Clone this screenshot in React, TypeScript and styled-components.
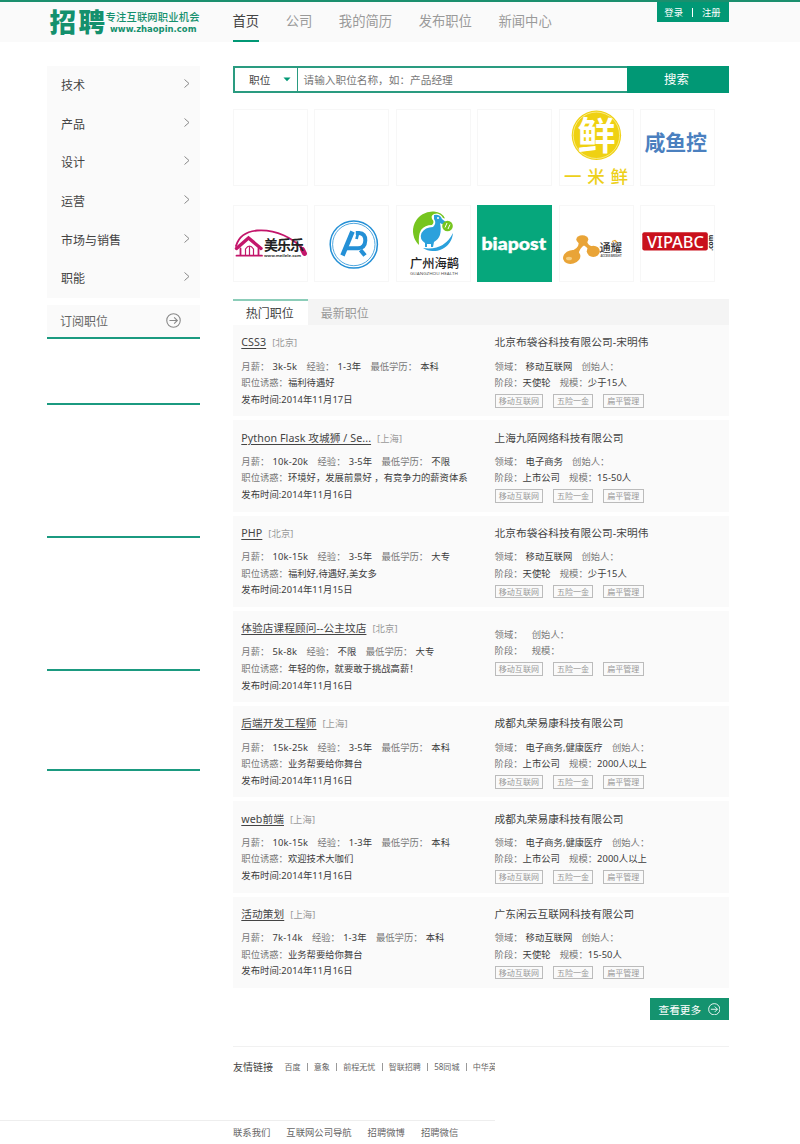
import React from "react";
import styled, { createGlobalStyle, css } from "styled-components";

const GREEN = "#019875";
const LATIN_CJK = `"Noto Sans", "Noto Sans CJK SC", sans-serif`;

const Global = createGlobalStyle`
  * { box-sizing: border-box; }
  body { margin: 0; background: #fff; font-family: ${LATIN_CJK}; color: #444; }
  #root { overflow: hidden; }
`;

const Page = styled.div`
  width: 800px;
  height: 1144px;
  overflow: hidden;
  white-space: nowrap;
`;

const Header = styled.header`
  height: 42px;
  border-top: 2px solid #1b8f6e;
  background: #fafafa;
  display: flex;
  align-items: flex-start;
  padding-left: 47px;
`;

const Brand = styled.svg`
  display: block;
  width: 185.5px;
  height: 40px;
  flex: none;
`;

const Nav = styled.nav`
  display: flex;
  gap: 26.5px;
  width: 424px;
`;

const NavItem = styled.a<{ $active?: boolean }>`
  height: 40px;
  line-height: 39px;
  font-size: 13.33px;
  color: ${(p) => (p.$active ? "#444" : "#9a9a9a")};
  border-bottom: 2px solid ${(p) => (p.$active ? GREEN : "transparent")};
`;

const Account = styled.div`
  width: 72px;
  height: 20px;
  background: ${GREEN};
  color: #fff;
  font-size: 9.33px;
  display: flex;
  align-items: center;
  justify-content: center;
  gap: 9px;
`;

const Divider = styled.i<{ $color: string; $h: number }>`
  flex: none;
  width: 1px;
  height: ${(p) => p.$h}px;
  background: ${(p) => p.$color};
`;

const Columns = styled.div`
  display: flex;
  height: 1004px;
  padding: 23.5px 0 0 47px;
`;

const Side = styled.aside`
  width: 153px;
  margin-right: 33px;
  flex: none;
`;

const Menu = styled.div`
  background: #fafafa;
  height: 232px;
`;

const MenuItem = styled.div`
  height: 38.6px;
  padding: 1px 9px 0 14px;
  display: flex;
  align-items: center;
  justify-content: space-between;
  font-size: 12px;
  color: #444;
  svg { position: relative; top: -1px; }
`;

const Subscribe = styled.div`
  margin-top: 7.5px;
  height: 33.5px;
  background: #fafafa;
  border-bottom: 2px solid #1b9a80;
  display: flex;
  align-items: center;
  justify-content: space-between;
  padding: 0 19px 0 13px;
  font-size: 12px;
  color: #666;
`;

const Rule = styled.div<{ $h: number }>`
  height: ${(p) => p.$h}px;
  border-bottom: 2px solid #1b9a80;
`;

const Main = styled.main`
  width: 495.5px;
  flex: none;
`;

const Search = styled.div`
  display: flex;
  height: 27.5px;
`;

const Kind = styled.div`
  width: 65px;
  border: 2px solid #2a9b80;
  border-right-width: 1.5px;
  display: flex;
  align-items: center;
  justify-content: space-between;
  padding: 0 6.5px 0 14px;
  font-size: 10.67px;
`;

const Field = styled.div`
  flex: 1;
  border: 2px solid #2a9b80;
  border-width: 2px 0;
  padding-left: 5.5px;
  line-height: 24px;
  font-size: 10.67px;
  color: #777;
`;

const SearchButton = styled.button`
  width: 102px;
  border: 0;
  padding: 0 2px 0 0;
  background: ${GREEN};
  color: #fff;
  font: 12.4px ${LATIN_CJK};
`;

const Partners = styled.div`
  margin-top: 16px;
  display: grid;
  grid-template-columns: repeat(6, 75px);
  column-gap: 6.4px;
  row-gap: 18.5px;
`;

const Tile = styled.div<{ $fill?: string }>`
  height: 77px;
  background: ${(p) => p.$fill ?? "#fff"};
  outline: 1px solid ${(p) => p.$fill ?? "#f7f7f7"};
  outline-offset: -1px;
  svg { display: block; overflow: visible; }
`;

const Tabs = styled.div`
  margin-top: 17.5px;
  height: 26px;
  background: #f4f4f4;
  display: flex;
`;

const Tab = styled.div<{ $active?: boolean }>`
  width: 75px;
  padding-right: 1.5px;
  text-align: center;
  font-size: 12px;
  line-height: 26px;
  border-top: 2px solid transparent;
  color: #999;
  ${(p) =>
    p.$active &&
    css`
      background: #fff;
      border-color: #8ccdb9;
      color: #444;
    `}
`;

const Job = styled.article`
  height: 91.25px;
  margin-bottom: 4px;
  background: #fafafa;
  display: flex;
  padding: 9.3px 0 0 8.3px;
`;

const JobSide = styled.div`
  flex: none;
  width: 253.3px;
`;

const Title = styled.div`
  height: 17.5px;
  line-height: 17.5px;
  font-size: 10.67px;
  letter-spacing: 0.08px;
  color: #444;
  a {
    text-decoration: underline;
    text-underline-offset: 1.5px;
  }
  small {
    font-size: 9.33px;
    color: #999;
    margin-left: 6px;
  }
`;

const Details = styled.div`
  margin-top: 6.8px;
  font-size: 9.33px;
  line-height: 16.6px;
`;

const Line = styled.div`
  display: flex;
  height: 16.6px;
`;

const Label = styled.span`
  color: #777;
`;

const Value = styled.span<{ $gap?: number; $spacing?: number }>`
  margin-left: ${(p) => p.$gap ?? 0}px;
  margin-right: 9.2px;
  letter-spacing: ${(p) => p.$spacing ?? 0}px;
  color: #3c3c3c;
`;

const Tags = styled.div`
  display: flex;
  gap: 9.6px;
  margin-top: 2.4px;
`;

const Tag = styled.span`
  height: 13.5px;
  border: 1px solid #bbb;
  padding: 0 3.2px;
  font-size: 8.05px;
  line-height: 12px;
  color: #999;
`;

const More = styled.button`
  display: flex;
  align-items: center;
  justify-content: space-between;
  width: 79px;
  height: 21.5px;
  margin: 10.5px 0 0 auto;
  padding: 0 8.5px 0 9px;
  border: 0;
  background: #14936f;
  color: #fff;
  font: 10.67px ${LATIN_CJK};
`;

const Friends = styled.section`
  margin-left: 233px;
  width: 495.5px;
  height: 74px;
  border-top: 1px solid #f1f1f1;
`;

const FriendLinks = styled.div`
  width: 262px;
  height: 39px;
  overflow: hidden;
  display: flex;
  align-items: center;
  gap: 6.15px;
  font-size: 8.05px;
  color: #666;
  b {
    font-size: 10px;
    font-weight: 400;
    color: #444;
    margin-right: 5.3px;
  }
`;

const Footer = styled.footer`
  width: 495px;
  height: 24px;
  border-top: 1px solid #eee;
  padding-left: 233px;
  display: flex;
  gap: 16px;
  font-size: 9.33px;
  line-height: 24px;
  color: #666;
`;

const CircleArrow = ({ size, color }: { size: number; color: string }) => (
  <svg width={size} height={size} viewBox="0 0 14 14" fill="none" stroke={color} strokeWidth="1">
    <circle cx="7" cy="7" r="6.3" />
    <path d="M3.2 7H10.6M7.6 4l3 3-3 3" />
  </svg>
);

const Chevron = () => (
  <svg width="8" height="10" viewBox="0 0 8 10" fill="none" stroke="#888" strokeWidth="1">
    <path d="M1.5 .5L6 4.5 1.5 8.5" />
  </svg>
);

const logos: ({ fill?: string; art: React.ReactNode } | null)[] = [
  null,
  null,
  null,
  null,
  {
    art: (
      <>
        <circle cx="37.4" cy="26.3" r="24.7" fill="#efd112" />
        <circle cx="37.4" cy="26.3" r="23.2" fill="none" stroke="#fff8c8" strokeWidth=".6" />
        <text x="18.4" y="40" fontSize="38" fontWeight="700" fill="#fff">鲜</text>
        <text x="5" y="74" fontSize="17.5" fontWeight="500" fill="#edd01a" textLength="64">一米鲜</text>
      </>
    ),
  },
  { art: <text x="4.5" y="41" fontSize="21" fontWeight="700" fill="#4b80bf" textLength="62.5">咸鱼控</text> },
  {
    art: (
      <>
        <g fill="none" stroke="#c3166b" strokeLinecap="round">
          <path d="M3 41Q7 27 24 25.500C44 24 60 34 68.500 42.500" strokeWidth="1.900" />
          <path d="M3.500 43.500L15.500 33L28 43.500" strokeWidth="3.400" />
          <path d="M3.500 50.700H29M7.500 43.500V50M25.500 43.500V50" strokeWidth="1.800" />
          <path d="M12.500 50V44Q16.500 38 20.500 44V50M16.500 42V50" strokeWidth="1.200" />
          <path d="M69.500 44.500L71.500 48.500" strokeWidth="5" />
        </g>
        <text x="31" y="45" fontSize="14" fontWeight="700" fill="#222" textLength="40">美乐乐</text>
        <text x="31" y="51.800" fontSize="4" fontWeight="700" fill="#333" textLength="37" lengthAdjust="spacingAndGlyphs">www.meilele.com</text>
      </>
    ),
  },
  {
    art: (
      <g fill="none" stroke="#2490d6">
        <circle cx="39.800" cy="39.500" r="23.600" strokeWidth="1.500" />
        <circle cx="39.800" cy="39.500" r="21.200" strokeWidth=".8" />
        <path d="M28.500 50.500L38.500 26.500" strokeWidth="4.600" />
        <path d="M41.800 28H45Q51.500 28.500 51.300 35.500Q51 43 44 43.300H33" strokeWidth="4" />
        <path d="M44.500 26.500L42.500 34" strokeWidth="2.800" />
        <path d="M46.500 45L51 50.500" strokeWidth="4.200" />
      </g>
    ),
  },
  {
    art: (
      <>
        <path d="M38 6.500A19.500 19.500 0 0 0 23 40Q22 30 25 25Q29 20 36 20Q39 17 36 14Q34 9 41 8.500Q45 9 47 13L49 13.500Q46 7 38 6.500Z" fill="#76c51f" />
        <path d="M57 28A19.500 19.500 0 0 1 27 43Q48 46 57 28Z" fill="#2ba1dc" />
        <path d="M38 10Q44 9 46 14L51 18Q46 20 44 18Q47 32 38 37L37 42H35V39L31 39V42H29V38Q23 34 25.500 28Q29 22 37 22Q41 18 38 14Z" fill="#2ba1dc" />
        <circle cx="42" cy="13" r="1" fill="#fff" />
        <circle cx="51.500" cy="21" r="5.300" fill="#76c51f" />
        <path d="M49 22.500L51 18M52 24L54 19.500" stroke="#fff" strokeWidth="1" />
        <text x="14" y="63" fontSize="12.300" fontWeight="500" fill="#222" textLength="49">广州海鹋</text>
        <text x="14" y="70" fontSize="4" fill="#555" textLength="48" lengthAdjust="spacingAndGlyphs">GUANGZHOU HEALTH</text>
      </>
    ),
  },
  {
    fill: "#06a77c",
    art: (
      <text x="4.500" y="45.300" fontFamily="Lato" fontSize="17" fontWeight="900" fill="#fff" stroke="#fff" strokeWidth=".4" textLength="64.500" lengthAdjust="spacingAndGlyphs">
        biapost
      </text>
    ),
  },
  {
    art: (
      <>
        <g fill="#e9a437">
          <path d="M19 36Q22 43 10 47L18 53Q21 42 25 40.500Q30 43 30 48L37 42Q28 42 28 35Z" />
          <ellipse cx="23.300" cy="34.500" rx="6" ry="4.200" />
          <ellipse cx="12.700" cy="52" rx="8.800" ry="6.700" transform="rotate(-15 12.700 52)" />
          <ellipse cx="34.300" cy="46.300" rx="6.500" ry="5.600" />
        </g>
        <ellipse cx="10" cy="53.500" rx="3" ry="1.800" fill="#f6cf82" />
        <text x="40.500" y="46.500" fontSize="11.200" fontWeight="500" fill="#333" textLength="22.500">通耀</text>
        <path d="M53 36.500l3-1 2 2" stroke="#e9a437" strokeWidth="1.200" fill="none" />
        <text x="41.500" y="51.500" fontSize="2.600" fontWeight="700" fill="#555" textLength="21" lengthAdjust="spacingAndGlyphs">ACCESS BRIGHT</text>
      </>
    ),
  },
  {
    art: (
      <>
        <rect x="2.300" y="27.300" width="65.500" height="18.300" rx="2" fill="#c9101c" />
        <text x="7" y="42.500" fontSize="17" fontWeight="500" fill="#fff" textLength="57" lengthAdjust="spacingAndGlyphs">VIPABC</text>
        <text transform="translate(72.500 45.700) rotate(-90)" fontSize="7" fontWeight="700" fill="#222" textLength="16" lengthAdjust="spacingAndGlyphs">.com</text>
      </>
    ),
  },
];

const SH = "[上海]";
const BJ = "[北京]";
const jobs = [
  ["CSS3", BJ, "3k-5k", "1-3年", "本科", "福利待遇好", "17", "北京布袋谷科技有限公司-宋明伟", "移动互联网", "天使轮", "少于15人"],
  ["Python Flask 攻城狮 / Se...", SH, "10k-20k", "3-5年", "不限", "环境好，发展前景好 ，有竞争力的薪资体系", "16", "上海九陌网络科技有限公司", "电子商务", "上市公司", "15-50人"],
  ["PHP", BJ, "10k-15k", "3-5年", "大专", "福利好,待遇好,美女多", "15", "北京布袋谷科技有限公司-宋明伟", "移动互联网", "天使轮", "少于15人"],
  ["体验店课程顾问--公主坟店", BJ, "5k-8k", "不限", "大专", "年轻的你，就要敢于挑战高薪！", "16", "", "", "", ""],
  ["后端开发工程师", SH, "15k-25k", "3-5年", "本科", "业务帮要给你舞台", "16", "成都丸荣易康科技有限公司", "电子商务,健康医疗", "上市公司", "2000人以上"],
  ["web前端", SH, "10k-15k", "1-3年", "本科", "欢迎技术大咖们", "16", "成都丸荣易康科技有限公司", "电子商务,健康医疗", "上市公司", "2000人以上"],
  ["活动策划", SH, "7k-14k", "1-3年", "本科", "业务帮要给你舞台", "16", "广东闲云互联网科技有限公司", "移动互联网", "天使轮", "15-50人"],
];

const friends = ["百度", "意象", "前程无忧", "智联招聘", "58同城", "中华英"];

export default function App() {
  return (
    <Page>
      <Global />
      <Header>
        <Brand viewBox="0 0 185.500 40" fill="#14906d" fontWeight="700">
          <text x="2.500" y="30" fontSize="26.500" fontWeight="900" textLength="55.500">招聘</text>
          <text x="58.500" y="19" fontSize="10.300" fontWeight="500" textLength="94">专注互联网职业机会</text>
          <text x="63" y="30" fontFamily="DejaVu Sans" fontSize="9" textLength="86.500" lengthAdjust="spacingAndGlyphs">www.zhaopin.com</text>
        </Brand>
        <Nav>
          {["首页", "公司", "我的简历", "发布职位", "新闻中心"].map((t, i) => (
            <NavItem key={t} $active={i === 0}>{t}</NavItem>
          ))}
        </Nav>
        <Account>
          <span>登录</span>
          <Divider $color="#fff" $h={9} />
          <span>注册</span>
        </Account>
      </Header>

      <Columns>
        <Side>
          <Menu>
            {["技术", "产品", "设计", "运营", "市场与销售", "职能"].map((t) => (
              <MenuItem key={t}>{t}<Chevron /></MenuItem>
            ))}
          </Menu>
          <Subscribe>订阅职位<CircleArrow size={15} color="#888" /></Subscribe>
          {[66.500, 133, 133, 99.500].map((h, i) => (
            <Rule key={i} $h={h} />
          ))}
        </Side>

        <Main>
          <Search>
            <Kind>
              职位
              <svg width="8" height="5" viewBox="0 0 8 5"><path d="M.5 .5h7L4 4.300z" fill={GREEN} /></svg>
            </Kind>
            <Field>请输入职位名称，如：产品经理</Field>
            <SearchButton>搜索</SearchButton>
          </Search>

          <Partners>
            {logos.map((logo, i) => (
              <Tile key={i} $fill={logo?.fill}>
                {logo && <svg width="75" height="77" viewBox="0 0 75 77">{logo.art}</svg>}
              </Tile>
            ))}
          </Partners>

          <Tabs>
            <Tab $active>热门职位</Tab>
            <Tab>最新职位</Tab>
          </Tabs>

          {jobs.map(([name, city, pay, exp, edu, perk, day, company, field, stage, scale]) => (
            <Job key={name}>
              <JobSide>
                <Title><a>{name}</a><small>{city}</small></Title>
                <Details>
                  <Line>
                    <Label>月薪：</Label><Value $gap={3.200} $spacing={0.220}>{pay}</Value>
                    <Label>经验：</Label><Value $gap={3.200} $spacing={0.150}>{exp}</Value>
                    <Label>最低学历：</Label><Value $gap={3.200}>{edu}</Value>
                  </Line>
                  <Line><Label>职位诱惑：</Label><Value>{perk}</Value></Line>
                  <Line><Value $spacing={0.050}>发布时间:2014年11月{day}日</Value></Line>
                </Details>
              </JobSide>
              <JobSide>
                {company && <Title>{company}</Title>}
                <Details>
                  <Line>
                    <Label>领域：</Label><Value $gap={field ? 3 : 0}>{field}</Value>
                    <Label>创始人：</Label>
                  </Line>
                  <Line>
                    <Label>阶段：</Label><Value>{stage}</Value>
                    <Label>规模：</Label><Value $spacing={0.080}>{scale}</Value>
                  </Line>
                  <Tags>
                    <Tag>移动互联网</Tag><Tag>五险一金</Tag><Tag>扁平管理</Tag>
                  </Tags>
                </Details>
              </JobSide>
            </Job>
          ))}
          <More>查看更多<CircleArrow size={12.500} color="#fff" /></More>
        </Main>
      </Columns>

      <Friends>
        <FriendLinks>
          <b>友情链接</b>
          {friends.map((t, i) => (
            <React.Fragment key={t}>
              {i > 0 && <Divider $color="#999" $h={8} />}
              <span>{t}</span>
            </React.Fragment>
          ))}
        </FriendLinks>
      </Friends>
      <Footer>
        <span>联系我们</span><span>互联网公司导航</span><span>招聘微博</span><span>招聘微信</span>
      </Footer>
    </Page>
  );
}
